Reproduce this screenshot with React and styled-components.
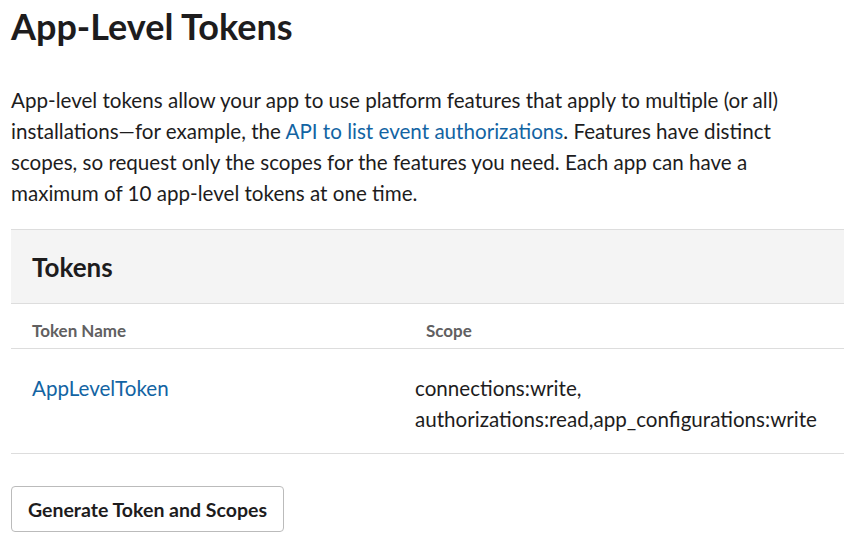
import React from 'react'
import styled, { createGlobalStyle } from 'styled-components'

const GlobalStyle = createGlobalStyle`
  body {
    margin: 0;
    background: #fff;
    font-family: Lato, "Noto Sans", sans-serif;
    color: #1d1c1d;
  }
`

const Page = styled.div`
  padding: 0 0 0 11px;
  overflow: hidden;
`

const Title = styled.h1`
  font-size: 36px;
  font-weight: 700;
  line-height: 52px;
  margin: 0;
`

const Intro = styled.p`
  font-size: 20.6px;
  line-height: 31px;
  margin: 33px 0 20px;
  padding-right: 20px;
`

const Link = styled.a`
  color: #1264a3;
  text-decoration: none;
`

const Section = styled.div`
  border-top: 1px solid #dddddd;
`

const SectionHeader = styled.div`
  background: #f4f4f4;
  border-bottom: 1px solid #dddddd;
  height: 73px;
  display: flex;
  align-items: center;
  padding-left: 21px;
  font-size: 26px;
  font-weight: 700;
`

const Row = styled.div`
  display: grid;
  grid-template-columns: 404px 1fr;
  border-bottom: 1px solid #dddddd;
  padding: ${p => p.$head ? '15px 0 5px' : '24px 0 18px'};
`

const HeadCell = styled.div`
  font-size: 17px;
  font-weight: 700;
  color: #616061;
  line-height: 24px;
  padding-left: ${p => p.$pad}px;
`

const Cell = styled.div`
  font-size: 20.6px;
  line-height: 31px;
  padding-left: ${p => p.$pad}px;
`

const Button = styled.button`
  margin-top: 32px;
  height: 46px;
  padding: 0 16px;
  font-family: inherit;
  font-size: 19.5px;
  font-weight: 700;
  color: #1d1c1d;
  background: #fff;
  border: 1px solid #bbbbbb;
  border-radius: 4px;
`

export default function App() {
  return (
    <>
      <GlobalStyle />
      <Page>
        <Title>App-Level Tokens</Title>
        <Intro>
          App-level tokens allow your app to use platform features that apply to multiple (or all)
          installations—for example, the <Link href="#">API to list event authorizations</Link>. Features
          have distinct scopes, so request only the scopes for the features you need. Each app can have a
          maximum of 10 app-level tokens at one time.
        </Intro>
        <Section>
          <SectionHeader>Tokens</SectionHeader>
          <Row $head>
            <HeadCell $pad={21}>Token Name</HeadCell>
            <HeadCell $pad={11}>Scope</HeadCell>
          </Row>
          <Row>
            <Cell $pad={21}><Link href="#">AppLevelToken</Link></Cell>
            <Cell $pad={0}>
              connections:write,<br />authorizations:read,app_configurations:write
            </Cell>
          </Row>
        </Section>
        <Button>Generate Token and Scopes</Button>
      </Page>
    </>
  )
}
